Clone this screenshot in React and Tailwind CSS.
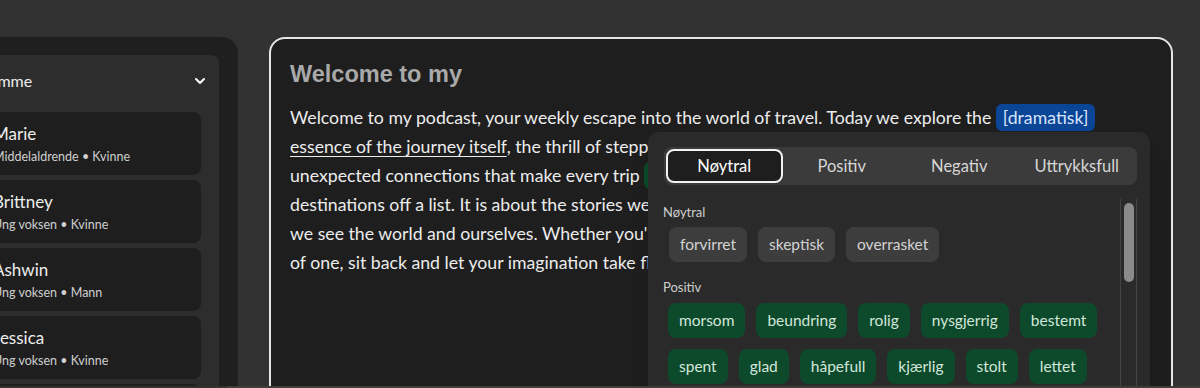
import React from 'react';
import { ChevronDown } from 'lucide-react';

const voices = [
    { name: 'Marie', meta: 'Middelaldrende • Kvinne' },
    { name: 'Brittney', meta: 'Ung voksen • Kvinne' },
    { name: 'Ashwin', meta: 'Ung voksen • Mann' },
    { name: 'Jessica', meta: 'Ung voksen • Kvinne' },
    { name: 'Daniel', meta: 'Middelaldrende • Mann' },
];

const neutral = ['forvirret', 'skeptisk', 'overrasket'];
const positive = [
    ['morsom', 'beundring', 'rolig', 'nysgjerrig', 'bestemt'],
    ['spent', 'glad', 'håpefull', 'kjærlig', 'stolt', 'lettet'],
];
const tabs = ['Nøytral', 'Positiv', 'Negativ', 'Uttrykksfull'];

const VoiceCard = ({ name, meta }) => (
    <div className="bg-[#1e1e1e] rounded-[8px] h-[63px] pl-[10px] pt-[11px] shrink-0">
        <p className="text-[17px] leading-[22px] text-[#ededed]">{name}</p>
        <p className="text-[12.5px] leading-[18px] mt-[3px] text-[#cfcfcf]">{meta}</p>
    </div>
);

const Chip = ({ label, green }) => (
    <span
        className={`h-[35px] px-[11px] rounded-[8px] flex items-center text-[15.5px] ${
            green ? 'bg-[#0c4a2b] text-[#d3e6da]' : 'bg-[#3d3d3d] text-[#d4d4d4]'
        }`}
    >
        {label}
    </span>
);

const TonePopover = () => (
    <div className="absolute left-[377px] top-[93px] w-[502px] h-[320px] bg-[#2a2a2a] rounded-[10px] pt-[15px] pl-[16px] pr-[13px] shadow-xl">
        <div className="h-[38px] bg-[#3b3b3b] rounded-[8px] p-[2px] grid grid-cols-4 gap-[1px]">
            {tabs.map((t, i) => (
                <div
                    key={t}
                    className={`flex items-center justify-center text-[16.5px] rounded-[8px] ${
                        i === 0 ? 'bg-[#1e1e1e] border-2 border-[#f2f2f2] text-white' : 'text-[#d6d6d6]'
                    }`}
                >
                    {t}
                </div>
            ))}
        </div>
        <div className="flex mt-[14px]">
            <div className="flex-1 pt-[5px]">
                <p className="text-[13px] leading-[16px] text-[#cfcfcf] ml-[-1px]">Nøytral</p>
                <div className="flex gap-[11px] pl-[5px] mt-[7px]">
                    {neutral.map((n) => (
                        <Chip key={n} label={n} />
                    ))}
                </div>
                <p className="text-[13px] leading-[16px] text-[#cfcfcf] ml-[-1px] mt-[17px]">Positiv</p>
                <div className="flex flex-col gap-[11px] pl-[4px] mt-[8px]">
                    {positive.map((row, i) => (
                        <div key={i} className="flex gap-[11px]">
                            {row.map((p) => (
                                <Chip key={p} label={p} green />
                            ))}
                        </div>
                    ))}
                </div>
            </div>
            <div className="w-[17px] h-[200px] border-x border-[#444] pt-[4px] flex justify-center shrink-0">
                <div className="w-[10px] h-[79px] rounded-full bg-[#8a8a8a]"></div>
            </div>
        </div>
    </div>
);

export default function App() {
    return (
        <div className="w-[1200px] h-[388px] bg-[#323232] overflow-hidden flex flex-col font-['Lato','Noto_Sans',sans-serif]">
            <div className="flex flex-1 min-h-0 pt-[37px] gap-[31px] overflow-hidden">
                <div className="ml-[-47px] w-[285px] shrink-0 bg-[#1f1f1f] rounded-tr-[16px] pt-[18px] pl-[18px] pr-[19px]">
                    <div className="bg-[#2d2d2d] rounded-t-[8px] h-full pl-[12px] pr-[18px] flex flex-col">
                        <div className="h-[57px] pb-[5px] flex items-center justify-between ml-[-8px] mr-[-4px] shrink-0">
                            <span className="text-[16px] text-[#ededed]">Stemme</span>
                            <ChevronDown size={16} strokeWidth={3} className="text-white mr-[-3px]" />
                        </div>
                        <div className="flex flex-col gap-[5px]">
                            {voices.map((v) => (
                                <VoiceCard key={v.name} {...v} />
                            ))}
                        </div>
                    </div>
                </div>
                <div className="relative w-[904px] h-[420px] shrink-0 bg-[#1e1e1e] border-2 border-[#e6e6e6] rounded-t-[16px] pl-[19px] pt-[20px] overflow-hidden">
                    <h1 className="font-['Liberation_Sans',Arial,sans-serif] font-bold text-[23.5px] leading-[30px] text-[#a9a9a9]">
                        Welcome to my
                    </h1>
                    <div className="mt-[14px] text-[17.7px] leading-[29px] text-[#ececec] whitespace-nowrap">
                        <p>
                            Welcome to my podcast, your weekly escape into the world of travel. Today we explore the{' '}
                            <span className="bg-[#0b4596] text-[#d7e4fb] rounded-[6px] px-[7px] py-[3px]">[dramatisk]</span>
                        </p>
                        <p>
                            <span className="underline underline-offset-[3px]">essence of the journey itself</span>, the thrill of stepping into the unknown and the
                        </p>
                        <p>
                            unexpected connections that make every trip{' '}
                            <span className="bg-[#0c4a2b] text-[#d3e6da] rounded-[6px] px-[7px] py-[3px]">[glad]</span> meaningful. Travel is more than ticking
                        </p>
                        <p>destinations off a list. It is about the stories we gather along the way and how they change how</p>
                        <p>we see the world and ourselves. Whether you're on the road or dreaming from the comfort</p>
                        <p>of one, sit back and let your imagination take flight.</p>
                    </div>
                    <TonePopover />
                </div>
            </div>
            <div className="h-[2px] ml-[227px] bg-[#3d3d3d] shrink-0"></div>
        </div>
    );
}
